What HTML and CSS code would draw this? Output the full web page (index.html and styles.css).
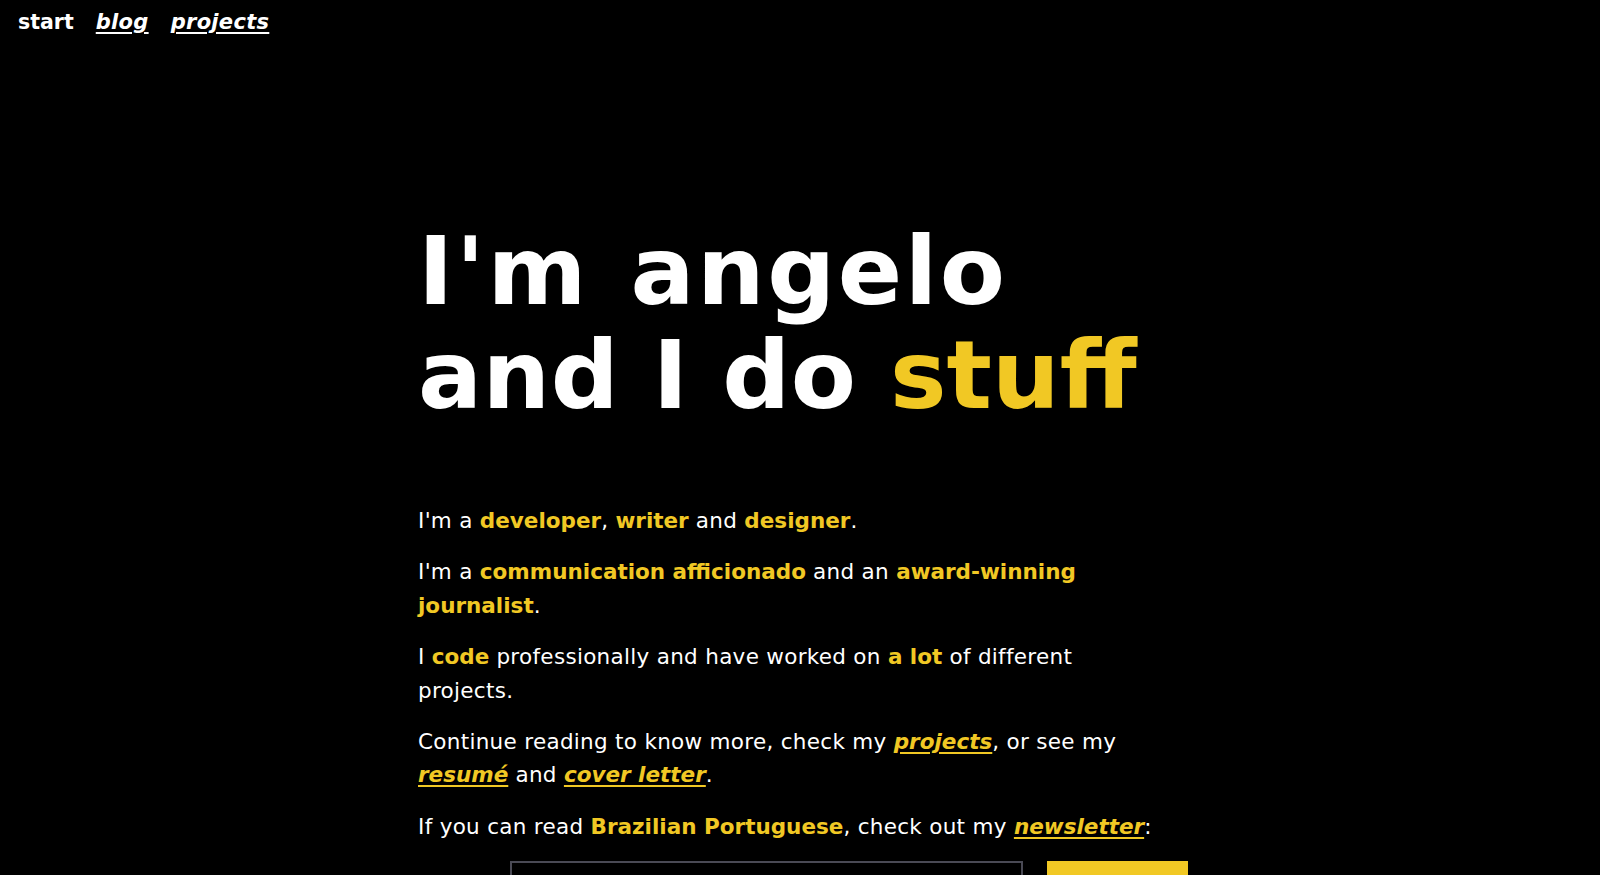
FILE: index.html
```html
<!DOCTYPE html>
<html lang="en">
<head>
<meta charset="utf-8">
<title>angelo</title>
<link rel="stylesheet" href="styles.css">
</head>
<body>
<nav class="nav">
  <span class="nav-item current">start</span>
  <a class="nav-item link" href="#">blog</a>
  <a class="nav-item link" href="#">projects</a>
</nav>
<main class="main">
  <h1 class="hero"><span class="hero-line">I'm angelo</span><br>and I do <span class="hl">stuff</span></h1>
  <p class="para">I'm a <b class="hl">developer</b>, <b class="hl">writer</b> and <b class="hl">designer</b>.</p>
  <p class="para">I'm a <b class="hl">communication afficionado</b> and an <b class="hl">award-winning journalist</b>.</p>
  <p class="para">I <b class="hl">code</b> professionally and have worked on <b class="hl">a lot</b> of different projects.</p>
  <p class="para">Continue reading to know more, check my <a class="hl-link" href="#">projects</a>, or see my <a class="hl-link" href="#">resumé</a> and <a class="hl-link" href="#">cover letter</a>.</p>
  <p class="para">If you can read <b class="hl">Brazilian Portuguese</b>, check out my <a class="hl-link" href="#">newsletter</a>:</p>
  <form class="form">
    <label class="form-label" for="email">email</label>
    <input class="form-input" id="email" type="email">
    <button class="form-button" type="button">subscribe</button>
  </form>
</main>
</body>
</html>
```
FILE: styles.css
```css
html, body {
  margin: 0;
  padding: 0;
  background: #000;
  color: #fff;
  font-family: "DejaVu Sans", "Liberation Sans", sans-serif;
}

.nav {
  display: flex;
  gap: 22px;
  padding: 10px 0 0 18px;
  font-size: 20.5px;
  line-height: 24px;
  font-weight: bold;
}

.nav-item {
  color: #fff;
}

.link {
  font-size: 21px;
  font-style: italic;
  letter-spacing: 0.3px;
  text-decoration: underline;
  text-decoration-thickness: 2px;
  text-underline-offset: 3px;
}

.main {
  width: 764px;
  margin: 0 auto;
  padding-top: 185px;
}

.hero {
  margin: 0 0 77px;
  font-size: 95px;
  line-height: 104px;
  font-weight: bold;
  letter-spacing: 0.5px;
}

.hero-line {
  word-spacing: 6px;
  letter-spacing: 2.5px;
}

.hl {
  color: #f1c824;
  font-weight: bold;
  letter-spacing: 0;
}

.para {
  max-width: 745px;
  margin: 0 0 17.6px;
  font-size: 21.5px;
  line-height: 33.6px;
  letter-spacing: 0.3px;
}

.hl-link {
  color: #f1c824;
  font-weight: bold;
  font-style: italic;
  letter-spacing: 0;
  text-decoration: underline;
  text-decoration-thickness: 2px;
  text-underline-offset: 3px;
}

.form {
  display: flex;
  align-items: stretch;
  margin: 16px -6px 0 0;
  height: 56px;
}

.form-label {
  width: 92px;
  align-self: center;
  font-size: 21px;
  padding-top: 20px;
}

.form-input {
  flex: 1;
  margin: 0;
  background: #000;
  border: 2px solid #4a4a55;
  color: #fff;
  font: inherit;
}

.form-button {
  width: 141px;
  margin-left: 24px;
  background: #f1c824;
  border: 0;
  color: #000;
  font: inherit;
  font-weight: bold;
  font-size: 21px;
}
```
